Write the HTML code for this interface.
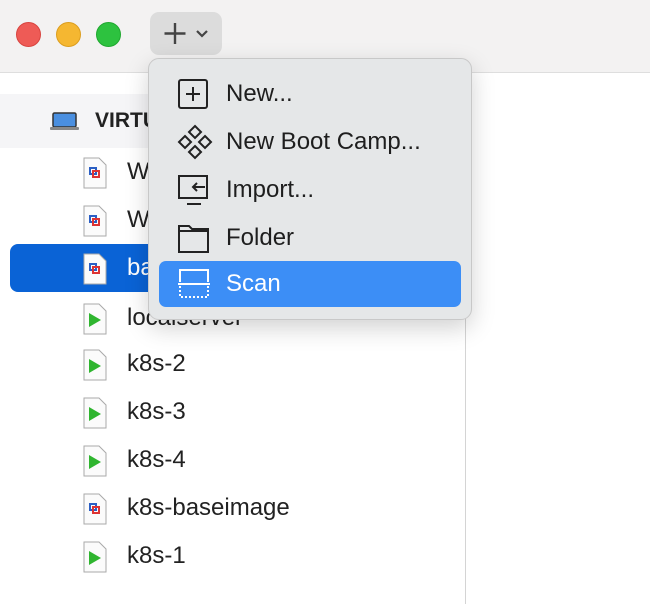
<!DOCTYPE html>
<html><head><style>
body{margin:0;width:650px;height:604px;overflow:hidden;background:#fff;font-family:"Liberation Sans",sans-serif;position:relative}
.tb{position:absolute;left:0;top:0;width:650px;height:72px;background:#f3f2f2;border-bottom:1px solid #dedede}
.dot{position:absolute;top:22px;width:24px;height:24px;border-radius:50%}
.btn{position:absolute;left:150px;top:12px;width:72px;height:43px;background:#dcdcdc;border-radius:9px}
.div{position:absolute;left:465px;top:73px;width:1px;height:531px;background:#d4d4d4}
.band{position:absolute;left:0;top:94px;width:465px;height:54px;background:#f5f5f7}
.row{position:absolute;left:0;height:48px;width:465px;font-size:24px;color:#222}
.row .t{position:absolute;left:127px;top:10px}
.row svg{position:absolute;left:82px;top:9px}
.sel{position:absolute;left:10px;top:244px;width:440px;height:48px;background:#0a63d6;border-radius:8px}
.menu{position:absolute;left:148px;top:58px;width:322px;height:260px;background:#e5e7e8;border:1px solid #c8c8c8;border-radius:11px;box-shadow:0 8px 24px rgba(0,0,0,.18)}
.mi{position:absolute;left:10px;width:302px;height:46px;font-size:24px;color:#1e1e1e}
.mi .t{position:absolute;left:67px;top:9px}
.mi svg{position:absolute;left:18px;top:7px}
</style></head><body>
<div class="tb"></div>
<div class="dot" style="left:16px;background:#ee5b56;border:1px solid #d8443f;width:23px;height:23px"></div>
<div class="dot" style="left:56px;background:#f5b731;border:1px solid #dc9e1e;width:23px;height:23px"></div>
<div class="dot" style="left:96px;background:#2dc23f;border:1px solid #1fa82f;width:23px;height:23px"></div>
<div class="btn"><svg width="72" height="43"><path d="M25 11v21M14.5 21.5h21" stroke="#444" stroke-width="2.4" fill="none"/><path d="M47 19l5 5 5-5" stroke="#444" stroke-width="2.2" fill="none"/></svg></div>
<div class="band"></div>
<div class="div"></div>
<svg style="position:absolute;left:50px;top:112px" width="30" height="20"><rect x="3" y="1" width="23" height="14" rx="1.5" fill="#4a8fe0" stroke="#333" stroke-width="1.5"/><rect x="0" y="15" width="29" height="3" rx="1" fill="#888"/></svg>
<div style="position:absolute;left:95px;top:109px;font-size:21px;font-weight:bold;color:#222">VIRTU</div>
<div class="sel"></div>
<div class="row" style="top:148px"><svg width="26" height="32"><path d="M2 1h15l7 7v23H2z" fill="#fbfbfb" stroke="#aaa"/><path d="M8 11h6v6H8z" fill="none" stroke="#2b5fc4" stroke-width="2"/><path d="M11 14h6v6h-6z" fill="none" stroke="#d33" stroke-width="2"/></svg><span class="t">W</span></div>
<div class="row" style="top:196px"><svg width="26" height="32"><path d="M2 1h15l7 7v23H2z" fill="#fbfbfb" stroke="#aaa"/><path d="M8 11h6v6H8z" fill="none" stroke="#2b5fc4" stroke-width="2"/><path d="M11 14h6v6h-6z" fill="none" stroke="#d33" stroke-width="2"/></svg><span class="t">W</span></div>
<div class="row" style="top:244px;color:#fff"><svg width="26" height="32"><path d="M2 1h15l7 7v23H2z" fill="#fbfbfb" stroke="#aaa"/><path d="M8 11h6v6H8z" fill="none" stroke="#2b5fc4" stroke-width="2"/><path d="M11 14h6v6h-6z" fill="none" stroke="#d33" stroke-width="2"/></svg><span class="t">ba</span></div>
<div class="row" style="top:294px"><svg width="26" height="32"><path d="M2 1h15l7 7v23H2z" fill="#fbfbfb" stroke="#aaa"/><path d="M7 10l12 7-12 7z" fill="#2fb52f"/></svg><span class="t">localserver</span></div>
<div class="row" style="top:340px"><svg width="26" height="32"><path d="M2 1h15l7 7v23H2z" fill="#fbfbfb" stroke="#aaa"/><path d="M7 10l12 7-12 7z" fill="#2fb52f"/></svg><span class="t">k8s-2</span></div>
<div class="row" style="top:388px"><svg width="26" height="32"><path d="M2 1h15l7 7v23H2z" fill="#fbfbfb" stroke="#aaa"/><path d="M7 10l12 7-12 7z" fill="#2fb52f"/></svg><span class="t">k8s-3</span></div>
<div class="row" style="top:436px"><svg width="26" height="32"><path d="M2 1h15l7 7v23H2z" fill="#fbfbfb" stroke="#aaa"/><path d="M7 10l12 7-12 7z" fill="#2fb52f"/></svg><span class="t">k8s-4</span></div>
<div class="row" style="top:484px"><svg width="26" height="32"><path d="M2 1h15l7 7v23H2z" fill="#fbfbfb" stroke="#aaa"/><path d="M8 11h6v6H8z" fill="none" stroke="#2b5fc4" stroke-width="2"/><path d="M11 14h6v6h-6z" fill="none" stroke="#d33" stroke-width="2"/></svg><span class="t">k8s-baseimage</span></div>
<div class="row" style="top:532px"><svg width="26" height="32"><path d="M2 1h15l7 7v23H2z" fill="#fbfbfb" stroke="#aaa"/><path d="M7 10l12 7-12 7z" fill="#2fb52f"/></svg><span class="t">k8s-1</span></div>

<div class="menu">
<div class="mi" style="top:12px"><svg width="34" height="32"><rect x="2" y="2" width="28" height="28" rx="2" fill="none" stroke="#222" stroke-width="2"/><path d="M16 9v14M9 16h14" stroke="#222" stroke-width="2"/></svg><span class="t">New...</span></div>
<div class="mi" style="top:60px"><svg width="36" height="36" style="top:5px"><g fill="none" stroke="#222" stroke-width="2"><path d="M18 2l6 6-6 6-6-6z"/><path d="M18 22l6 6-6 6-6-6z"/><path d="M8 12l6 6-6 6-6-6z"/><path d="M28 12l6 6-6 6-6-6z"/></g></svg><span class="t">New Boot Camp...</span></div>
<div class="mi" style="top:108px"><svg width="34" height="34"><path d="M2 2h28v22H2z M10 30h14" fill="none" stroke="#222" stroke-width="2"/><path d="M28 13h-12m4-4l-4 4 4 4" fill="none" stroke="#222" stroke-width="2"/></svg><span class="t">Import...</span></div>
<div class="mi" style="top:156px"><svg width="34" height="32"><path d="M2 4h10l3 3h16v23H2z M2 9h29" fill="none" stroke="#222" stroke-width="2"/></svg><span class="t">Folder</span></div>
<div class="mi" style="top:202px;background:#3c8ef6;border-radius:7px;color:#fff"><svg width="34" height="32"><path d="M3 14V2h28v12 M1 16h32" fill="none" stroke="#fff" stroke-width="2"/><path d="M3 18v11h28V18" fill="none" stroke="#fff" stroke-width="2" stroke-dasharray="2 2"/></svg><span class="t">Scan</span></div>
</div>
</body></html>
